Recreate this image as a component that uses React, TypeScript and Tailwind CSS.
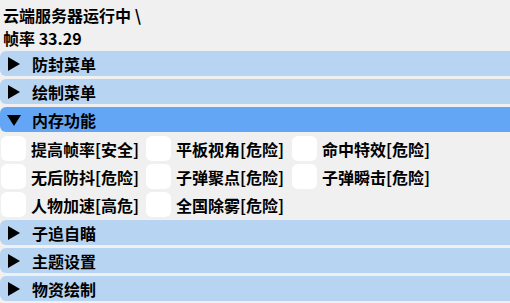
const font = { fontFamily: '"Noto Sans CJK SC", "Noto Sans", sans-serif' };

function Arrow({ open }: { open: boolean }) {
  return (
    <svg width="14" height="14" viewBox="0 0 14 14" className="shrink-0">
      {open ? <polygon points="0,2 14,2 7,13" fill="#000" /> : <polygon points="1,0 13,7 1,14" fill="#000" />}
    </svg>
  );
}

function Header({ label, open = false }: { label: string; open?: boolean }) {
  return (
    <div
      className={`flex h-[25px] items-center gap-[11px] rounded-l-[6px] pl-[7px] ${open ? "bg-[#64a6f6]" : "bg-[#b7d4f3]"}`}
    >
      <Arrow open={open} />
      <span className="text-[16px] font-bold leading-none text-black">{label}</span>
    </div>
  );
}

function Check({ label }: { label: string }) {
  return (
    <div className="flex h-[25px] items-center gap-[5px]">
      <div className="h-[25px] w-[25px] shrink-0 rounded-[6px] bg-white" />
      <span className="whitespace-nowrap text-[16px] font-bold leading-none text-black">{label}</span>
    </div>
  );
}

const items = [
  "提高帧率[安全]",
  "平板视角[危险]",
  "命中特效[危险]",
  "无后防抖[危险]",
  "子弹聚点[危险]",
  "子弹瞬击[危险]",
  "人物加速[高危]",
  "全国除雾[危险]",
];

export default function App() {
  return (
    <div className="h-[303px] w-[510px] overflow-hidden bg-[#f0f0f0] pt-[4px]" style={font}>
      <div className="pl-[3px] text-[16px] font-bold leading-[23px] text-black">云端服务器运行中 \</div>
      <div className="pl-[3px] text-[16px] font-bold leading-[23px] text-black">帧率 33.29</div>
      <div className="mt-[1px] flex flex-col gap-[3px]">
        <Header label="防封菜单" />
        <Header label="绘制菜单" />
        <Header label="内存功能" open />
        <div className="mt-[1px] grid grid-cols-[145px_146px_145px] gap-y-[3px] pl-[1px]">
          {items.map((t) => (
            <Check key={t} label={t} />
          ))}
        </div>
        <Header label="子追自瞄" />
        <Header label="主题设置" />
        <Header label="物资绘制" />
      </div>
    </div>
  );
}
